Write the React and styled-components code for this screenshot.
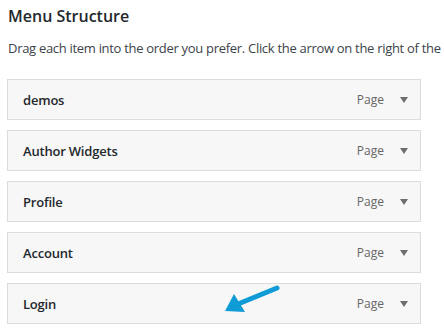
import styled, { createGlobalStyle } from "styled-components";

const GlobalStyle = createGlobalStyle`
    html, body {
        margin: 0;
        padding: 0;
        background: #fff;
        overflow: hidden;
    }
    body {
        font-family: "Open Sans", "Noto Sans", sans-serif;
        color: #23282d;
    }
`;

const items = ["demos", "Author Widgets", "Profile", "Account", "Login"];

const App = () => {
    return (
        <>
            <GlobalStyle />
            <Page>
                <Title>Menu Structure</Title>
                <Hint>Drag each item into the order you prefer. Click the arrow on the right of the</Hint>
                <List>
                    {items.map((label, i) => (
                        <Item key={label}>
                            <Label>{label}</Label>
                            <Controls>
                                <Type>Page</Type>
                                <Toggle />
                            </Controls>
                            {i === items.length - 1 && (
                                <Pointer viewBox="0 0 60 30" width="60" height="30">
                                    <line x1="54" y1="4" x2="15" y2="20" stroke="#0e9bd6" strokeWidth="5" strokeLinecap="round" />
                                    <polygon points="2,27 11,10 22,28" fill="#0e9bd6" />
                                </Pointer>
                            )}
                        </Item>
                    ))}
                </List>
            </Page>
        </>
    );
};

export default App;

const Page = styled.div`
    padding: 5px 0 0 7px;
    width: 437px;
`;

const Title = styled.h2`
    margin: 0 0 0 1px;
    font-size: 16px;
    font-weight: 600;
    line-height: 22px;
    color: #23282d;
`;

const Hint = styled.p`
    margin: 12px 0 0 1px;
    font-size: 13px;
    letter-spacing: -0.3px;
    line-height: 18px;
    color: #3c434a;
    white-space: nowrap;
`;

const List = styled.div`
    display: flex;
    flex-direction: column;
    gap: 10px;
    margin-top: 22px;
    width: 414px;
`;

const Item = styled.div`
    position: relative;
    display: flex;
    align-items: center;
    justify-content: space-between;
    height: 39px;
    padding: 0 12px 0 15px;
    background: #f7f7f7;
    border: 1px solid #dcdcdc;
`;

const Label = styled.span`
    font-size: 13px;
    font-weight: 600;
    letter-spacing: -0.2px;
    color: #23282d;
`;

const Controls = styled.div`
    display: flex;
    align-items: center;
    gap: 16px;
`;

const Type = styled.span`
    font-size: 12px;
    color: #666;
`;

const Toggle = styled.span`
    width: 0;
    height: 0;
    border-left: 4px solid transparent;
    border-right: 4px solid transparent;
    border-top: 6px solid #6e6e6e;
    margin-top: 1px;
`;

const Pointer = styled.svg`
    position: absolute;
    left: 215px;
    top: 0;
`;
